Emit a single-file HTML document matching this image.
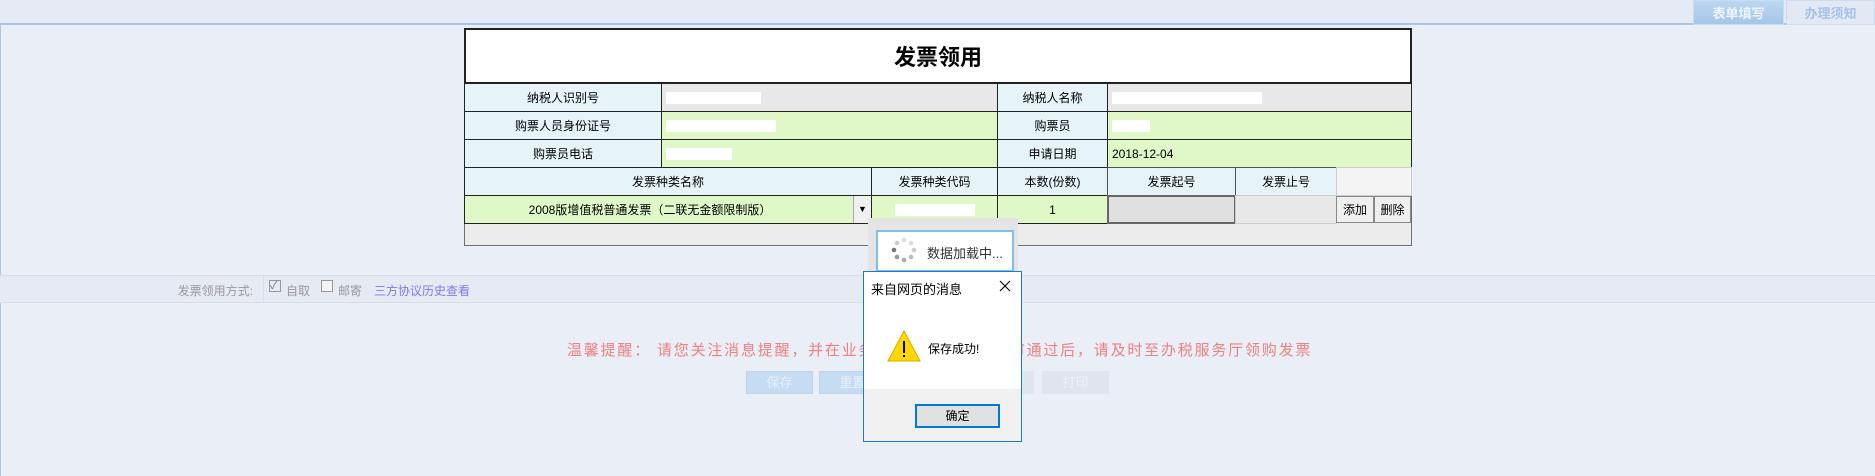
<!DOCTYPE html>
<html><head><meta charset="utf-8">
<style>
*{margin:0;padding:0;box-sizing:border-box}
body{width:1875px;height:476px;background:#e9eef7;font-family:"Liberation Sans","Noto Sans CJK SC",sans-serif;font-size:12px;color:#000;position:relative;overflow:hidden}
.abs{position:absolute}
.topbar{left:0;top:0;width:1875px;height:25px;background:#e6eaf4;border-bottom:2px solid #a9c6e6}
.tab1{left:1693px;top:0;width:91px;height:25px;background:linear-gradient(#bcd6f0,#a6c6e8);color:#eef4fb;font-weight:bold;font-size:13px;text-align:center;line-height:25px;border:1px solid #c8dcf0}
.tab2{left:1786px;top:0;width:89px;height:25px;background:#e2e9f5;color:#a6c2e6;font-weight:bold;font-size:13px;text-align:center;line-height:25px;border:1px solid #d0dcee}
.leftline{left:0;top:25px;width:1px;height:451px;background:#a9c6e6}
.frame{left:464px;top:28px;width:948px;height:218px;background:#ececec;border:1px solid #707070}
.c{position:absolute;border:1px solid #222;display:flex;align-items:center;justify-content:center;font-size:12px}
.lb{background:#e6f3f8}
.gr{background:#e8e8e8}
.gn{background:#e0f8c8}
.val{justify-content:flex-start;padding-left:4px}
.mask{display:inline-block;background:#fff;height:12px}
.btn{position:absolute;background:#efefef;border:1px solid #888;display:flex;align-items:center;justify-content:center;font-size:12px}
</style></head><body>
<div class="abs topbar"></div>
<div class="abs tab1">表单填写</div>
<div class="abs tab2">办理须知</div>
<div class="abs leftline"></div>

<div class="abs frame"></div>
<div class="c" style="left:464px;top:28px;width:948px;height:56px;background:#fff;border-width:2px;font-size:22px;font-weight:bold;">发票领用</div>
<div class="c lb" style="left:464px;top:83px;width:198px;height:29px">纳税人识别号</div>
<div class="c gr val" style="left:661px;top:83px;width:337px;height:29px"><span class="mask" style="width:95px"></span></div>
<div class="c lb" style="left:997px;top:83px;width:111px;height:29px">纳税人名称</div>
<div class="c gr val" style="left:1107px;top:83px;width:305px;height:29px"><span class="mask" style="width:150px"></span></div>
<div class="c lb" style="left:464px;top:111px;width:198px;height:29px">购票人员身份证号</div>
<div class="c gn val" style="left:661px;top:111px;width:337px;height:29px"><span class="mask" style="width:110px"></span></div>
<div class="c lb" style="left:997px;top:111px;width:111px;height:29px">购票员</div>
<div class="c gn val" style="left:1107px;top:111px;width:305px;height:29px"><span class="mask" style="width:38px"></span></div>
<div class="c lb" style="left:464px;top:139px;width:198px;height:29px">购票员电话</div>
<div class="c gn val" style="left:661px;top:139px;width:337px;height:29px"><span class="mask" style="width:66px"></span></div>
<div class="c lb" style="left:997px;top:139px;width:111px;height:29px">申请日期</div>
<div class="c gn val" style="left:1107px;top:139px;width:305px;height:29px">2018-12-04</div>
<div class="c lb" style="left:464px;top:167px;width:408px;height:29px">发票种类名称</div>
<div class="c lb" style="left:871px;top:167px;width:127px;height:29px">发票种类代码</div>
<div class="c lb" style="left:997px;top:167px;width:111px;height:29px">本数(份数)</div>
<div class="c lb" style="left:1107px;top:167px;width:129px;height:29px;border-color:#555">发票起号</div>
<div class="c lb" style="left:1235px;top:167px;width:102px;height:29px;border-color:#555">发票止号</div>
<div class="c" style="left:1336px;top:167px;width:76px;height:29px;background:#f4f4f4;border-color:#ccc"></div>
<div class="c gn" style="left:464px;top:195px;width:408px;height:29px;padding-right:36px">2008版增值税普通发票（二联无金额限制版）</div>
<div class="abs" style="left:853px;top:196px;width:18px;height:27px;background:#f0f0f0;border-left:1px solid #aaa;font-size:9px;text-align:center;line-height:27px">▼</div>
<div class="c gn" style="left:871px;top:195px;width:127px;height:29px"><span class="mask" style="width:80px"></span></div>
<div class="c gn" style="left:997px;top:195px;width:111px;height:29px">1</div>
<div class="c" style="left:1107px;top:195px;width:129px;height:29px;background:#e0e0e0;border:2px solid #666"></div>
<div class="c gr" style="left:1235px;top:195px;width:102px;height:29px;border-color:#ccc"></div>
<div class="btn" style="left:1336px;top:196px;width:38px;height:27px">添加</div>
<div class="btn" style="left:1374px;top:196px;width:37px;height:27px">删除</div>

<div class="abs" style="left:0;top:275px;width:1875px;height:28px;background:#e6eaf3;border-top:1px solid #d8dee9;border-bottom:1px solid #d8dee9"></div>
<div class="abs" style="left:263px;top:275px;width:1px;height:28px;background:#d8dee9"></div>
<div class="abs" style="left:150px;top:282px;width:103px;text-align:right;color:#999;font-size:12px">发票领用方式:</div>
<div class="abs" style="left:269px;top:280px;width:12px;height:12px;border:1px solid #999;font-size:11px;line-height:10px;color:#777">✓</div>
<div class="abs" style="left:286px;top:282px;color:#999">自取</div>
<div class="abs" style="left:321px;top:280px;width:12px;height:12px;border:1px solid #999;background:#f4f4f4"></div>
<div class="abs" style="left:338px;top:282px;color:#999">邮寄</div>
<div class="abs" style="left:374px;top:282px;color:#7b7bf0">三方协议历史查看</div>

<div class="abs" style="left:567px;top:339px;width:760px;color:#f08080;font-size:15px;white-space:nowrap;letter-spacing:1.8px">温馨提醒： 请您关注消息提醒，并在业务查询中查看，待预审通过后，请及时至办税服务厅领购发票</div>
<div class="abs" style="left:746px;top:371px;width:67px;height:23px;background:#c6dcf2;border:1px solid #bcd4ee;color:#e8f0fa;text-align:center;line-height:21px;font-size:13px">保存</div>
<div class="abs" style="left:819px;top:371px;width:67px;height:23px;background:#c6dcf2;border:1px solid #bcd4ee;color:#e8f0fa;text-align:center;line-height:21px;font-size:13px">重置</div>
<div class="abs" style="left:967px;top:371px;width:67px;height:23px;background:#dfe5ef"></div>
<div class="abs" style="left:1042px;top:371px;width:67px;height:23px;background:#dfe5ef;color:#eef1f6;text-align:center;line-height:23px;font-size:13px">打印</div>

<div class="abs" style="left:868px;top:218px;width:150px;height:54px;background:#e4e4e4"></div>
<div class="abs" style="left:876px;top:230px;width:138px;height:42px;background:#fff;border:2px solid #7cc0ee"></div>
<svg class="abs" style="left:890px;top:236px" width="28" height="28" viewBox="0 0 28 28">
<circle cx="14" cy="4" r="2.3" fill="#ddd"/><circle cx="21" cy="7" r="2.3" fill="#ddd"/><circle cx="24" cy="14" r="2.3" fill="#ccc"/><circle cx="21" cy="21" r="2.3" fill="#bbb"/><circle cx="14" cy="24" r="2.3" fill="#aaa"/><circle cx="7" cy="21" r="2.3" fill="#999"/><circle cx="4" cy="14" r="2.3" fill="#777"/><circle cx="7" cy="7" r="2.3" fill="#ccc"/></svg>
<div class="abs" style="left:927px;top:243px;font-size:13px;color:#333">数据加载中...</div>

<div class="abs" style="left:863px;top:271px;width:159px;height:171px;background:#fff;border:1px solid #1a7ad4"></div>
<div class="abs" style="left:864px;top:389px;width:157px;height:52px;background:#f0f0f0"></div>
<div class="abs" style="left:871px;top:279px;font-size:13px">来自网页的消息</div>
<svg class="abs" style="left:999px;top:280px" width="12" height="12" viewBox="0 0 12 12"><path d="M1 1L11 11M11 1L1 11" stroke="#000" stroke-width="1.1"/></svg>
<svg class="abs" style="left:887px;top:330px" width="34" height="32" viewBox="0 0 34 32"><polygon points="17,1 33,31 1,31" fill="#ffd800" stroke="#e0a800" stroke-width="1"/><rect x="16" y="11" width="2" height="12" fill="#000"/><rect x="16" y="25" width="2" height="2" fill="#000"/></svg>
<div class="abs" style="left:928px;top:340px;font-size:12px">保存成功!</div>
<div class="abs" style="left:915px;top:404px;width:85px;height:24px;background:#e1e1e1;border:2px solid #0078d7;text-align:center;line-height:20px;font-size:12px">确定</div>
</body></html>
